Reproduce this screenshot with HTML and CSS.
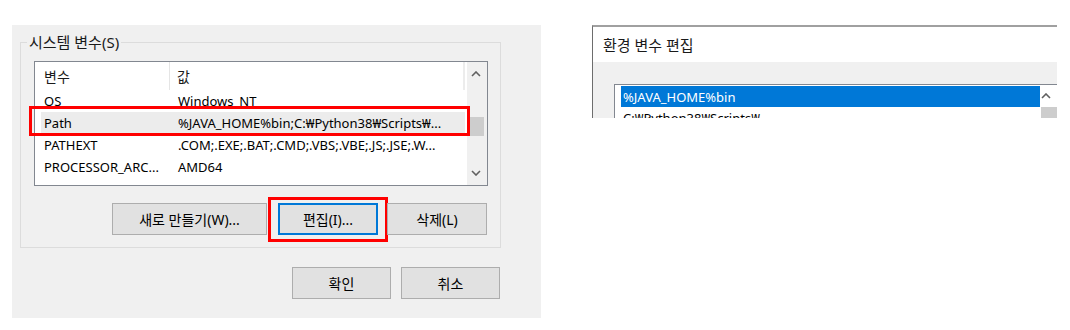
FILE: index.html
```html
<!DOCTYPE html>
<html lang="ko">
<head>
<meta charset="utf-8">
<title>시스템 변수</title>
<link rel="stylesheet" href="styles.css">
</head>
<body>
<div class="page">
  <section class="sysvars">
    <fieldset class="group">
      <legend class="group-title">시스템 변수(S)</legend>
      <div class="list">
        <div class="list-body">
          <div class="list-header">
            <span class="hcell hcell-name">변수</span>
            <span class="hcell hcell-value">값</span>
            <span class="hcell-end"></span>
          </div>
          <div class="row"><span class="cell cell-name">OS</span><span class="cell cell-value">Windows_NT</span></div>
          <div class="row row-selected">
            <span class="cell cell-name">Path</span><span class="cell cell-value">%JAVA_HOME%bin;C:₩Python38₩Scripts₩...</span>
            <span class="annot annot-row"></span>
          </div>
          <div class="row"><span class="cell cell-name">PATHEXT</span><span class="cell cell-value">.COM;.EXE;.BAT;.CMD;.VBS;.VBE;.JS;.JSE;.W...</span></div>
          <div class="row"><span class="cell cell-name">PROCESSOR_ARC...</span><span class="cell cell-value">AMD64</span></div>
        </div>
        <div class="scrollbar">
          <div class="sb-arrow">
            <svg width="10" height="6" viewBox="0 0 10 6"><path d="M1 5 L5 1 L9 5" fill="none" stroke="#606060" stroke-width="1.6"/></svg>
          </div>
          <div class="sb-track"><div class="sb-thumb"></div></div>
          <div class="sb-arrow">
            <svg width="10" height="6" viewBox="0 0 10 6"><path d="M1 1 L5 5 L9 1" fill="none" stroke="#606060" stroke-width="1.6"/></svg>
          </div>
        </div>
      </div>
      <div class="btn-row">
        <button class="btn btn-new">새로 만들기(W)...</button>
        <button class="btn btn-edit">편집(I)...<span class="annot annot-btn"></span></button>
        <button class="btn btn-del">삭제(L)</button>
      </div>
    </fieldset>
    <div class="dialog-buttons">
      <button class="btn btn-dlg">확인</button>
      <button class="btn btn-dlg">취소</button>
    </div>
  </section>

  <section class="editdlg">
    <div class="editdlg-title">환경 변수 편집</div>
    <div class="editdlg-body">
      <div class="elist">
        <div class="elist-items">
          <div class="eitem eitem-selected">%JAVA_HOME%bin</div>
          <div class="eitem">C:₩Python38₩Scripts₩</div>
        </div>
        <div class="escroll">
          <div class="escroll-arrow">
            <svg width="10" height="6" viewBox="0 0 10 6"><path d="M1 5 L5 1 L9 5" fill="none" stroke="#606060" stroke-width="1.6"/></svg>
          </div>
          <div class="escroll-thumb"></div>
        </div>
      </div>
    </div>
  </section>
</div>
</body>
</html>
```

FILE: styles.css
```css
* { box-sizing: border-box; }

body {
  margin: 0;
  background: #ffffff;
  font-family: "Noto Sans", "Noto Sans CJK KR", sans-serif;
  font-size: 13px;
  color: #000000;
}

.page {
  display: flex;
  align-items: flex-start;
  padding: 25px 0 0 12px;
}

/* ---------- left: system variables ---------- */
.sysvars {
  width: 529px;
  height: 293px;
  background: #f0f0f0;
  padding: 8px 0 0 8px;
}

.group {
  margin: 0;
  width: 481px;
  padding: 10px 13px 12px 13px;
  border: 1px solid #dcdcdc;
  min-inline-size: 0;
}

.group-title {
  padding: 0 2px;
  margin-left: -7px;
  line-height: 18px;
  font-size: 15px;
  color: #1a1a1a;
}

.list {
  display: flex;
  width: 454px;
  height: 125px;
  border: 1px solid #828790;
  background: #ffffff;
}

.list-body {
  flex: 1;
  display: flex;
  flex-direction: column;
}

.list-header {
  display: flex;
  height: 28px;
  align-items: stretch;
}

.hcell {
  display: flex;
  align-items: center;
  color: #1a1a1a;
  font-size: 14px;
}

.hcell-name {
  width: 135px;
  padding-left: 9px;
  border-right: 1px solid #e5e5e5;
}

.hcell-value {
  flex: 1;
  padding-left: 7px;
}

.hcell-end {
  width: 2px;
  margin-right: 2px;
  background: #ececec;
}

.row {
  position: relative;
  display: flex;
  align-items: center;
  height: 22px;
  margin: 0 2px 0 6px;
  white-space: nowrap;
}

.row-selected {
  background: #ececec;
}

.cell-name {
  width: 129px;
  padding-left: 3px;
}

.cell-value {
  padding-left: 8px;
}

.scrollbar {
  width: 20px;
  background: #f0f0f0;
  display: flex;
  flex-direction: column;
}

.sb-arrow {
  height: 24px;
  display: flex;
  align-items: center;
  justify-content: center;
  padding-right: 3px;
}

.sb-track {
  flex: 1;
}

.sb-thumb {
  margin: 31px 3px 0 0;
  height: 19px;
  background: #cdcdcd;
}

.btn-row {
  display: flex;
  margin-top: 17px;
  padding-left: 78px;
}

.btn {
  position: relative;
  height: 32px;
  background: #e1e1e1;
  border: 1px solid #adadad;
  font: inherit;
  font-size: 14px;
  color: #000000;
  padding: 0;
}

.btn-new { width: 155px; }
.btn-edit { width: 100px; margin-left: 11px; border: 2px solid #0078d7; }
.btn-del { width: 100px; margin-left: 9px; }

.dialog-buttons {
  display: flex;
  justify-content: flex-end;
  gap: 10px;
  margin-top: 19px;
  padding-right: 41px;
}

.btn-dlg { width: 99px; }

/* red annotation boxes */
.annot {
  position: absolute;
  border: 3px solid #ff0000;
  pointer-events: none;
}

.annot-row {
  left: -12px;
  top: -6px;
  right: -5px;
  bottom: -2px;
}

.annot-btn {
  left: -12px;
  top: -8px;
  right: -12px;
  bottom: -9px;
}

/* ---------- right: edit dialog ---------- */
.editdlg {
  margin-left: 51px;
  width: 465px;
  height: 93px;
  overflow: hidden;
  border-top: 2px solid #a0a0a0;
  border-left: 1px solid #6d6d6d;
  display: flex;
  flex-direction: column;
}

.editdlg-title {
  flex: none;
  height: 35px;
  display: flex;
  align-items: center;
  padding-left: 10px;
  font-size: 15px;
  background: #ffffff;
  color: #1a1a1a;
}

.editdlg-body {
  flex: none;
  height: 120px;
  background: #f0f0f0;
  padding: 22px 0 0 21px;
}

.elist {
  display: flex;
  height: 120px;
  border: 1px solid #828790;
  border-right: none;
  background: #ffffff;
}

.elist-items {
  width: 431px;
  padding: 1px 0 0 6px;
}

.eitem {
  height: 21px;
  display: flex;
  align-items: center;
  padding-left: 2px;
  white-space: nowrap;
}

.eitem-selected {
  background: #0078d7;
  color: #ffffff;
}

.escroll {
  flex: 1;
  display: flex;
  flex-direction: column;
  padding-left: 1px;
}

.escroll-arrow {
  height: 22px;
  display: flex;
  align-items: center;
  justify-content: center;
  padding-right: 6px;
}

.escroll-thumb {
  height: 40px;
  background: #cdcdcd;
}
```
